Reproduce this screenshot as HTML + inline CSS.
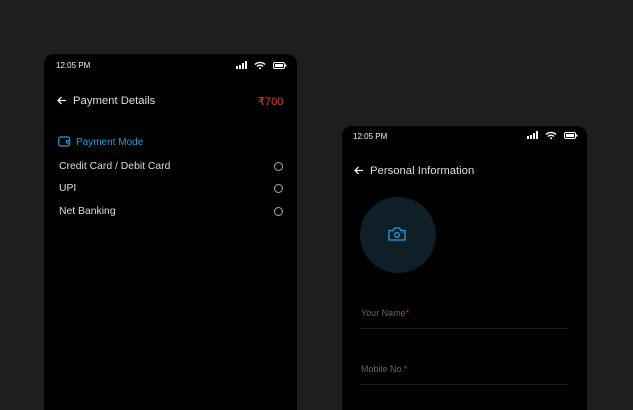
<!DOCTYPE html>
<html><head><meta charset="utf-8"><style>
*{margin:0;padding:0;box-sizing:border-box}
html,body{width:633px;height:410px;overflow:hidden}
body{background:#1e1e1e;position:relative;font-family:"Liberation Sans",sans-serif;color:#ddd}
.ph{position:absolute;background:#000;border-radius:10px 10px 0 0}
.t{position:absolute;white-space:nowrap}
.st{font-size:8px;color:#eee}
.rad{position:absolute;width:9px;height:9px;border:1px solid #aaa;border-radius:50%}
</style></head><body>
<div class="ph" style="left:44px;top:54px;width:253px;height:356px"></div>
<div class="ph" style="left:342px;top:126px;width:245px;height:284px"></div>

<!-- phone1 -->
<div class="t st" style="left:56px;top:61px">12:05 PM</div>
<svg style="position:absolute;left:235px;top:60px" width="54" height="12">
<g fill="#fff"><rect x="1" y="6" width="2" height="3"/><rect x="4" y="5" width="2" height="4"/><rect x="7" y="3" width="2" height="6"/><rect x="10" y="1" width="2" height="8"/></g>
<path d="M20 4.5a7 7 0 0 1 10 0M22 6.5a4 4 0 0 1 6 0" stroke="#fff" stroke-width="1.4" fill="none"/><circle cx="25" cy="8.3" r="1" fill="#fff"/>
<rect x="38.5" y="2.5" width="11" height="6" rx="1.5" stroke="#fff" fill="none"/><rect x="40" y="4" width="8" height="3" fill="#fff"/><rect x="50" y="4.5" width="1.5" height="2" fill="#fff"/>
</svg>
<svg style="position:absolute;left:57px;top:96px" width="10" height="9"><path d="M9 4.5H1.5M4.5 1L1 4.5 4.5 8" stroke="#eee" stroke-width="1.3" fill="none"/></svg>
<div class="t" style="left:73px;top:95px;font-size:11.3px;color:#ddd">Payment Details</div>
<div class="t" style="left:258px;top:95px;font-size:11px;color:#e0413a">₹700</div>
<svg style="position:absolute;left:58px;top:136px" width="13" height="11"><rect x="0.7" y="1" width="11" height="9" rx="2" stroke="#1f9fd8" stroke-width="1.2" fill="none"/><path d="M11.7 4.5H8.5v2.5h3.2" stroke="#1f9fd8" stroke-width="1.1" fill="none"/></svg>
<div class="t" style="left:76px;top:137px;font-size:10px;color:#1f9fd8">Payment Mode</div>
<div class="t" style="left:59px;top:161px;font-size:10.4px">Credit Card / Debit Card</div>
<div class="t" style="left:59px;top:183px;font-size:10.4px">UPI</div>
<div class="t" style="left:59px;top:206px;font-size:10.4px">Net Banking</div>
<div class="rad" style="left:274px;top:162px"></div>
<div class="rad" style="left:274px;top:184px"></div>
<div class="rad" style="left:274px;top:207px"></div>

<!-- phone2 -->
<div class="t st" style="left:353px;top:132px">12:05 PM</div>
<svg style="position:absolute;left:526px;top:130px" width="54" height="12">
<g fill="#fff"><rect x="1" y="6" width="2" height="3"/><rect x="4" y="5" width="2" height="4"/><rect x="7" y="3" width="2" height="6"/><rect x="10" y="1" width="2" height="8"/></g>
<path d="M20 4.5a7 7 0 0 1 10 0M22 6.5a4 4 0 0 1 6 0" stroke="#fff" stroke-width="1.4" fill="none"/><circle cx="25" cy="8.3" r="1" fill="#fff"/>
<rect x="38.5" y="2.5" width="11" height="6" rx="1.5" stroke="#fff" fill="none"/><rect x="40" y="4" width="8" height="3" fill="#fff"/><rect x="50" y="4.5" width="1.5" height="2" fill="#fff"/>
</svg>
<svg style="position:absolute;left:354px;top:166px" width="10" height="9"><path d="M9 4.5H1.5M4.5 1L1 4.5 4.5 8" stroke="#eee" stroke-width="1.3" fill="none"/></svg>
<div class="t" style="left:370px;top:165px;font-size:11.3px;color:#ddd">Personal Information</div>
<div style="position:absolute;left:360px;top:197px;width:76px;height:76px;border-radius:50%;background:#0f1f27"></div>
<svg style="position:absolute;left:387px;top:226px" width="22" height="16"><path d="M2 4.5h4l1.5-2.5h5l1.5 2.5h4v9.5H2z" stroke="#1f9fd8" stroke-width="1.3" fill="none" stroke-linejoin="round"/><circle cx="10" cy="9" r="2.3" stroke="#1f9fd8" stroke-width="1.3" fill="none"/><circle cx="16" cy="6.5" r="0.6" fill="#1f9fd8"/></svg>
<div class="t" style="left:361px;top:308px;font-size:9px;color:#666">Your Name<span style="color:#c33">*</span></div>
<div style="position:absolute;left:360px;top:328px;width:208px;height:1px;background:#1c1c1c"></div>
<div class="t" style="left:361px;top:364px;font-size:9px;color:#666">Mobile No.<span style="color:#c33">*</span></div>
<div style="position:absolute;left:360px;top:384px;width:208px;height:1px;background:#1c1c1c"></div>
</body></html>
